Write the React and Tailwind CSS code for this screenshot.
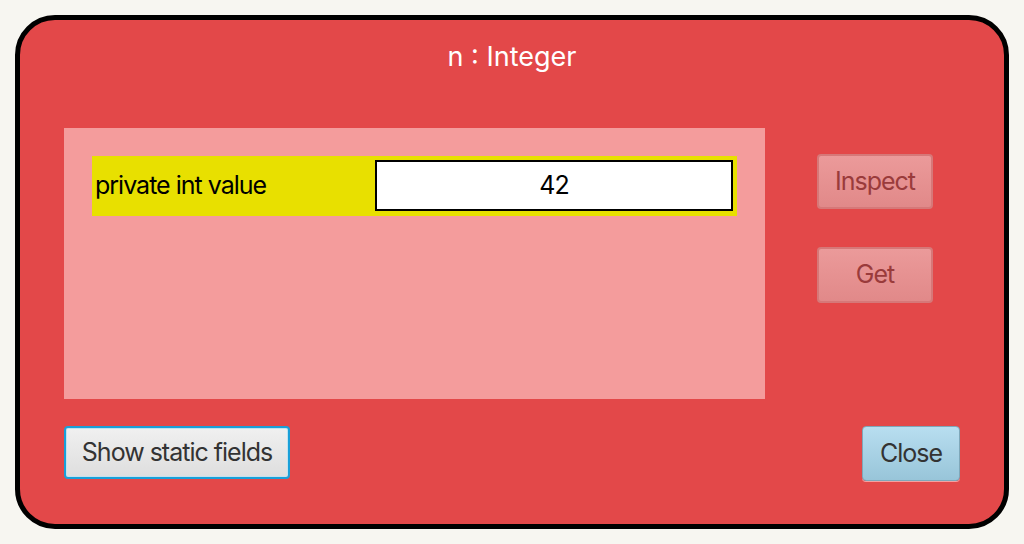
import React from 'react';

const font = { fontFamily: 'Inter, "Noto Sans", sans-serif' };

const App = () => {
  return (
    <div className="w-[1024px] h-[544px] bg-[#f7f6f1] p-[15px]" style={font}>
      <div className="h-full border-[5px] border-black rounded-[40px] bg-[#e34849] flex flex-col px-[44px]">
        {/* title */}
        <div className="pt-[22px] mb-[56px] h-[30px] box-content text-center text-white text-[27px] leading-[30px]">
          n : Integer
        </div>

        <div className="flex items-start">
          <div className="w-[701px] h-[271px] bg-[#f49c9c] p-[28px]">
            <div className="h-[60px] bg-[#e8e000] flex items-start">
              <div className="w-[283px] h-[60px] flex items-center pl-[3px] text-[25px] tracking-[-1px] text-black">
                private int value
              </div>
              <div className="mt-[4px] w-[358px] h-[51px] border-2 border-black bg-white flex items-center justify-center text-[25px] tracking-[-1px] text-black">
                42
              </div>
            </div>
          </div>

          <div className="ml-[52px] mt-[26px] flex flex-col gap-[38px]">
            <button className="w-[116px] h-[55px] rounded-[4px] border-2 border-[#d67878] bg-gradient-to-b from-[#eb9a9a] to-[#e18989] text-[25px] tracking-[-1px] text-[#9a3b3b]">
              Inspect
            </button>
            <button className="w-[116px] h-[56px] rounded-[4px] border-2 border-[#d67878] bg-gradient-to-b from-[#eb9a9a] to-[#e18989] text-[25px] tracking-[-1px] text-[#9a3b3b]">
              Get
            </button>
          </div>
        </div>

        <div className="mt-[27px] flex items-start justify-between">
          <button className="w-[226px] h-[53px] rounded-[4px] border-2 border-[#1a9fd8] bg-gradient-to-b from-[#f0f0f0] to-[#dedede] text-[25px] tracking-[-1px] text-[#333333] shadow-[inset_0_0_0_1px_#bfe3f0]">
            Show static fields
          </button>
          <button className="w-[98px] h-[55px] rounded-[4px] border border-[#7ea7b9] bg-gradient-to-b from-[#b8def0] to-[#98c5d9] text-[25px] tracking-[-1px] text-[#333333] shadow-[0_1px_0_#f5a0a0]">
            Close
          </button>
        </div>
      </div>
    </div>
  );
};

export default App;
